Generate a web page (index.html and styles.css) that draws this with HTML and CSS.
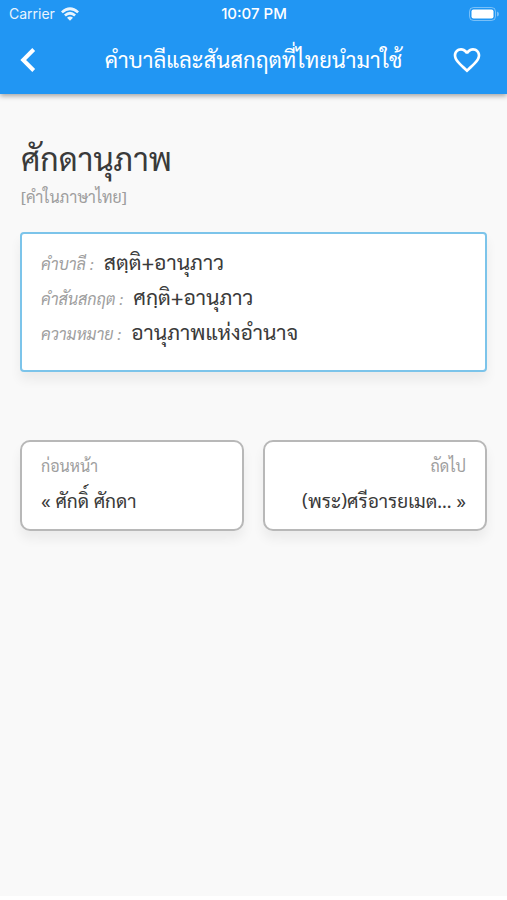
FILE: index.html
```html
<!DOCTYPE html>
<html lang="th">
<head>
<meta charset="utf-8">
<meta name="viewport" content="width=device-width, initial-scale=1">
<title>ศักดานุภาพ</title>
<link rel="stylesheet" href="styles.css">
</head>
<body>
<div class="screen">
  <header class="top">
    <div class="status">
      <div class="carrier">
        <span>Carrier</span>
        <svg class="wifi" viewBox="0 0 18 14" aria-hidden="true">
          <path d="M0 4.4Q9-3.8 18 4.4L16.2 6.3Q9 0 1.8 6.3Z"/>
          <path d="M3 7.6Q9 2 15 7.6L13.2 9.5Q9 5.8 4.8 9.5Z"/>
          <path d="M6 10.8Q9 8.2 12 10.8L9 13.8Z"/>
        </svg>
      </div>
      <div class="clock">10:07 PM</div>
      <svg class="battery" viewBox="0 0 30 14" aria-hidden="true">
        <rect class="battery-shell" x="0.5" y="0.5" width="26" height="13" rx="4"/>
        <rect x="2.5" y="2.5" width="22" height="9" rx="2"/>
        <path class="battery-tip" d="M28 4.5Q30 5 30 7T28 9.5Z"/>
      </svg>
    </div>
    <nav class="bar">
      <button class="icon-button" type="button" aria-label="ย้อนกลับ">
        <svg viewBox="0 0 32 32" aria-hidden="true"><path class="stroke-back" d="M21.7 5.5L11.2 16L21.7 26.5"/></svg>
      </button>
      <h1 class="bar-title">คำบาลีและสันสกฤตที่ไทยนำมาใช้</h1>
      <button class="icon-button favorite" type="button" aria-label="รายการโปรด">
        <svg viewBox="0 0 24 24" aria-hidden="true"><path d="M16.5 3c-1.74 0-3.41.81-4.5 2.09C10.91 3.81 9.24 3 7.5 3 4.42 3 2 5.42 2 8.5c0 3.78 3.4 6.86 8.55 11.54L12 21.35l1.45-1.32C18.6 15.36 22 12.28 22 8.5 22 5.42 19.58 3 16.5 3zm-4.4 15.55l-.1.1-.1-.1C7.14 14.24 4 11.39 4 8.5 4 6.5 5.5 5 7.5 5c1.54 0 3.04.99 3.57 2.36h1.87C13.46 5.99 14.96 5 16.5 5c2 0 3.5 1.5 3.5 3.5 0 2.89-3.14 5.74-7.9 10.05z"/></svg>
      </button>
    </nav>
  </header>
  <main class="content">
    <h2 class="word">ศักดานุภาพ</h2>
    <p class="kind">[คำในภาษาไทย]</p>
    <dl class="card details">
      <div class="row"><dt>คำบาลี :</dt><dd>สตฺติ+อานุภาว</dd></div>
      <div class="row"><dt>คำสันสกฤต :</dt><dd>ศกฺติ+อานุภาว</dd></div>
      <div class="row"><dt>ความหมาย :</dt><dd>อานุภาพแห่งอำนาจ</dd></div>
    </dl>
    <nav class="pager">
      <a class="card page-link" href="#prev">
        <span class="hint">ก่อนหน้า</span>
        <span class="target">« ศักดิ์ ศักดา</span>
      </a>
      <a class="card page-link next" href="#next">
        <span class="hint">ถัดไป</span>
        <span class="target">(พระ)ศรีอารยเมต... »</span>
      </a>
    </nav>
  </main>
</div>
</body>
</html>
```
FILE: styles.css
```css
* { box-sizing: border-box; }

body {
  margin: 0;
  background: #fff;
  color: #3a3a3a;
  font-family: Sarabun, "Noto Sans", sans-serif;
}

h1, h2, p, dl, dd { margin: 0; font-weight: 400; }

.screen {
  display: flex;
  flex-direction: column;
  min-height: calc(100vh - 4px);
  background: #f9f9f9;
}

.top {
  background: #2196f3;
  color: #fff;
  box-shadow: 0 2px 5px rgba(0, 0, 0, 0.35);
}

.top svg { display: block; fill: currentColor; }

.status {
  display: grid;
  grid-template-columns: 1fr auto 1fr;
  align-items: center;
  height: 27px;
  padding: 0 8px 0 9px;
  font: 14px/18px Inter, sans-serif;
}

.carrier { display: flex; align-items: center; gap: 6px; opacity: 0.9; }
.clock { font-weight: 500; font-size: 15px; }
.wifi { width: 18px; height: 14px; }
.battery { width: 30px; height: 14px; justify-self: end; }
.battery-shell { fill: none; stroke: currentColor; opacity: 0.4; }
.battery-tip { opacity: 0.4; }

.bar {
  display: grid;
  grid-template-columns: 1fr auto 1fr;
  align-items: center;
  height: 67px;
  padding: 0 24px 2px 12px;
}

.icon-button {
  justify-self: start;
  padding: 0;
  border: 0;
  background: none;
  color: inherit;
}

.favorite { justify-self: end; }

.icon-button svg { width: 32px; height: 32px; }

.stroke-back { fill: none; stroke: currentColor; stroke-width: 4; }

.bar-title {
  padding: 0 0 2px 12px;
  font-size: 22px;
  line-height: 32px;
}

.content { padding: 42px 20px; }

.word { padding-left: 1px; font-size: 32px; line-height: 44px; }

.kind { padding-left: 1px; font-size: 16px; line-height: 34px; color: #9e9e9e; }

.card {
  border: 2px solid #b8b8b8;
  background: #fff;
  box-shadow: 0 8px 12px rgba(0, 0, 0, 0.06);
}

.details {
  margin-top: 18px;
  padding: 10px 19px 21px;
  border-color: #7cc4ea;
  border-radius: 4px;
}

.row { display: flex; align-items: baseline; gap: 10px; line-height: 35px; }
.row dt { font-size: 16px; line-height: 24px; font-style: italic; color: #9e9e9e; }
.row dd { font-size: 21px; }

.pager {
  display: grid;
  grid-template-columns: 1fr 1fr;
  gap: 19px;
  margin-top: 68px;
}

.page-link {
  display: flex;
  flex-direction: column;
  min-width: 0;
  padding: 7px 19px 12px;
  border-radius: 10px;
  color: inherit;
  text-decoration: none;
  line-height: 34px;
}

.next { text-align: right; }
.hint { font-size: 16px; color: #9e9e9e; }
.target { font-size: 19px; white-space: nowrap; }
```
